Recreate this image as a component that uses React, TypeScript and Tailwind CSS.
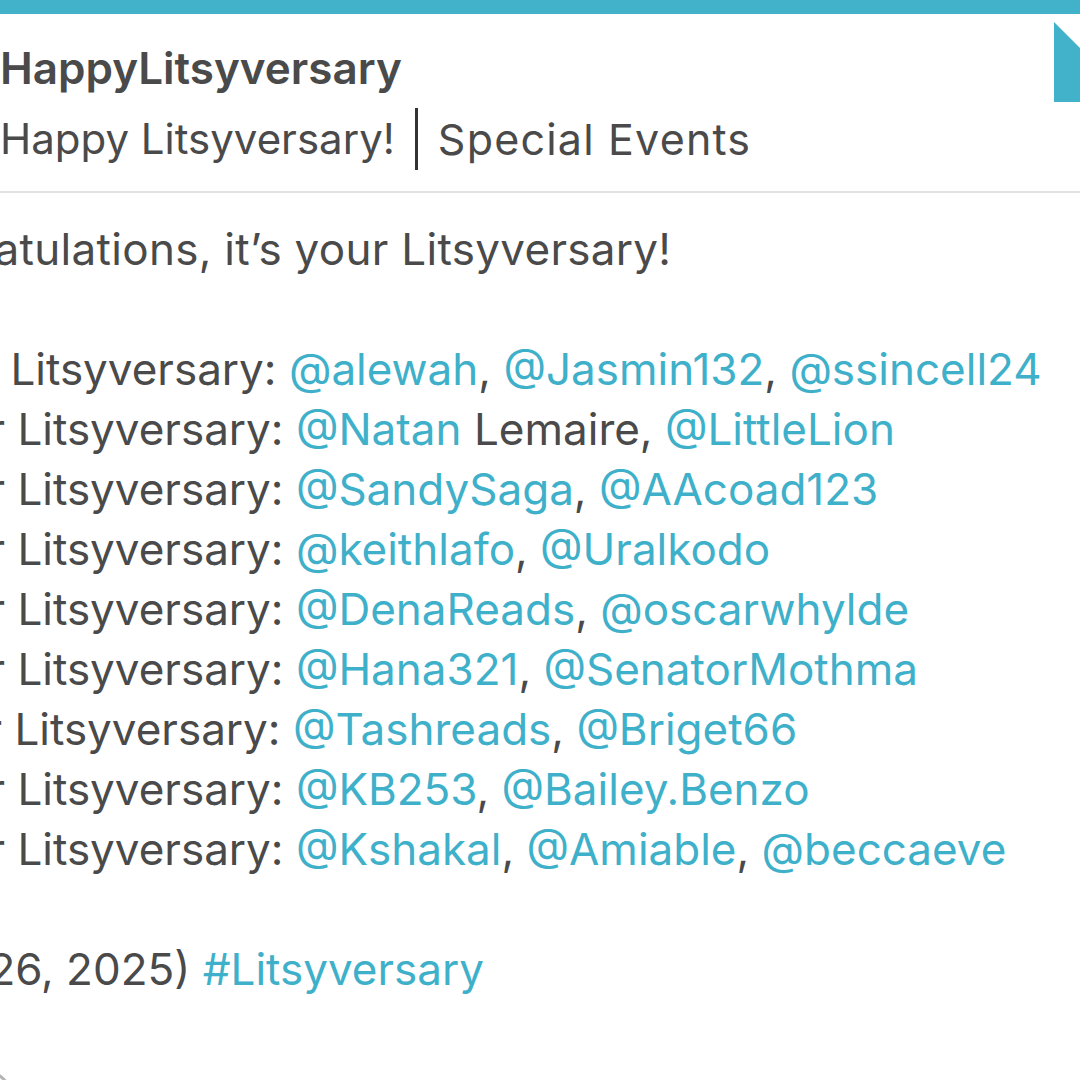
import React from 'react';

type Part = { text: string; link?: boolean };

interface Row {
  prefix: string;
  labelW: string; // width of the year label column (mostly off screen)
  parts: Part[];
}

const rows: Row[] = [
  {
    prefix: '10th',
    labelW: 'w-[133px]',
    parts: [
      { text: '@alewah', link: true },
      { text: ', ' },
      { text: '@Jasmin132', link: true },
      { text: ', ' },
      { text: '@ssincell24', link: true },
    ],
  },
  {
    prefix: '9 Year',
    labelW: 'w-[140px]',
    parts: [
      { text: '@Natan', link: true },
      { text: ' Lemaire, ' },
      { text: '@LittleLion', link: true },
    ],
  },
  {
    prefix: '8 Year',
    labelW: 'w-[140px]',
    parts: [
      { text: '@SandySaga', link: true },
      { text: ', ' },
      { text: '@AAcoad123', link: true },
    ],
  },
  {
    prefix: '7 Year',
    labelW: 'w-[140px]',
    parts: [
      { text: '@keithlafo', link: true },
      { text: ', ' },
      { text: '@Uralkodo', link: true },
    ],
  },
  {
    prefix: '6 Year',
    labelW: 'w-[140px]',
    parts: [
      { text: '@DenaReads', link: true },
      { text: ', ' },
      { text: '@oscarwhylde', link: true },
    ],
  },
  {
    prefix: '5 Year',
    labelW: 'w-[140px]',
    parts: [
      { text: '@Hana321', link: true },
      { text: ', ' },
      { text: '@SenatorMothma', link: true },
    ],
  },
  {
    prefix: '4 Year',
    labelW: 'w-[137px]',
    parts: [
      { text: '@Tashreads', link: true },
      { text: ', ' },
      { text: '@Briget66', link: true },
    ],
  },
  {
    prefix: '3 Year',
    labelW: 'w-[140px]',
    parts: [
      { text: '@KB253', link: true },
      { text: ', ' },
      { text: '@Bailey.Benzo', link: true },
    ],
  },
  {
    prefix: '2 Year',
    labelW: 'w-[140px]',
    parts: [
      { text: '@Kshakal', link: true },
      { text: ', ' },
      { text: '@Amiable', link: true },
      { text: ', ' },
      { text: '@beccaeve', link: true },
    ],
  },
];

const Mentions = ({ parts }: { parts: Part[] }) => (
  <>
    {parts.map((p, i) => (
      <span key={i} className={p.link ? 'text-[#3fb0ca]' : ''}>
        {p.text}
      </span>
    ))}
  </>
);

export default function App() {
  return (
    <div className="w-[1080px] h-[1080px] overflow-hidden bg-white font-['Inter',sans-serif] text-[#4a4a4a]">
      {/* top bar */}
      <div className="h-[14px] bg-[#41b2ca]" />

      {/* post header */}
      <div className="flex justify-between items-start">
        <div className="flex flex-col pt-[24px] pb-[21px]">
          <div className="text-[44px] leading-[60px] font-semibold whitespace-nowrap">
            HappyLitsyversary
          </div>
          <div className="mt-[10px] flex items-center text-[43px] leading-[62px] whitespace-nowrap">
            <span className="text-[42px]">Happy Litsyversary!</span>
            <div className="w-[3px] h-[62px] bg-[#333] mx-[20px]" />
            <span className="tracking-[1.2px]">Special Events</span>
          </div>
        </div>
        <svg width="26" height="80" viewBox="0 0 26 80" className="mt-[8px] shrink-0">
          <polygon points="0,0 26,26 26,80 0,80" fill="#41b2ca" />
        </svg>
      </div>
      <div className="h-[2px] bg-[#e2e2e2]" />

      {/* body */}
      <div className="-ml-[135px] pt-[26px] text-[44px] leading-[60px] whitespace-nowrap">
        <div className="tracking-[0.3px]">Congratulations, it’s your Litsyversary!</div>
        <div className="h-[60px]" />
        {rows.map((r, i) => (
          <div key={i}>
            <span className={`inline-block text-right ${r.labelW}`}>{r.prefix}</span> Litsyversary:{' '}
            <Mentions parts={r.parts} />
          </div>
        ))}
        <div className="h-[60px]" />
        <div>
          <span className="inline-block w-[111px] text-right">(Jan</span> 26, 2025){' '}
          <span className="text-[#3fb0ca]">#Litsyversary</span>
        </div>
        <div className="mt-[72px] ml-[100px] w-[46px] h-[46px] rounded-full border-[3px] border-[#b5b5b5]" />
      </div>
    </div>
  );
}
